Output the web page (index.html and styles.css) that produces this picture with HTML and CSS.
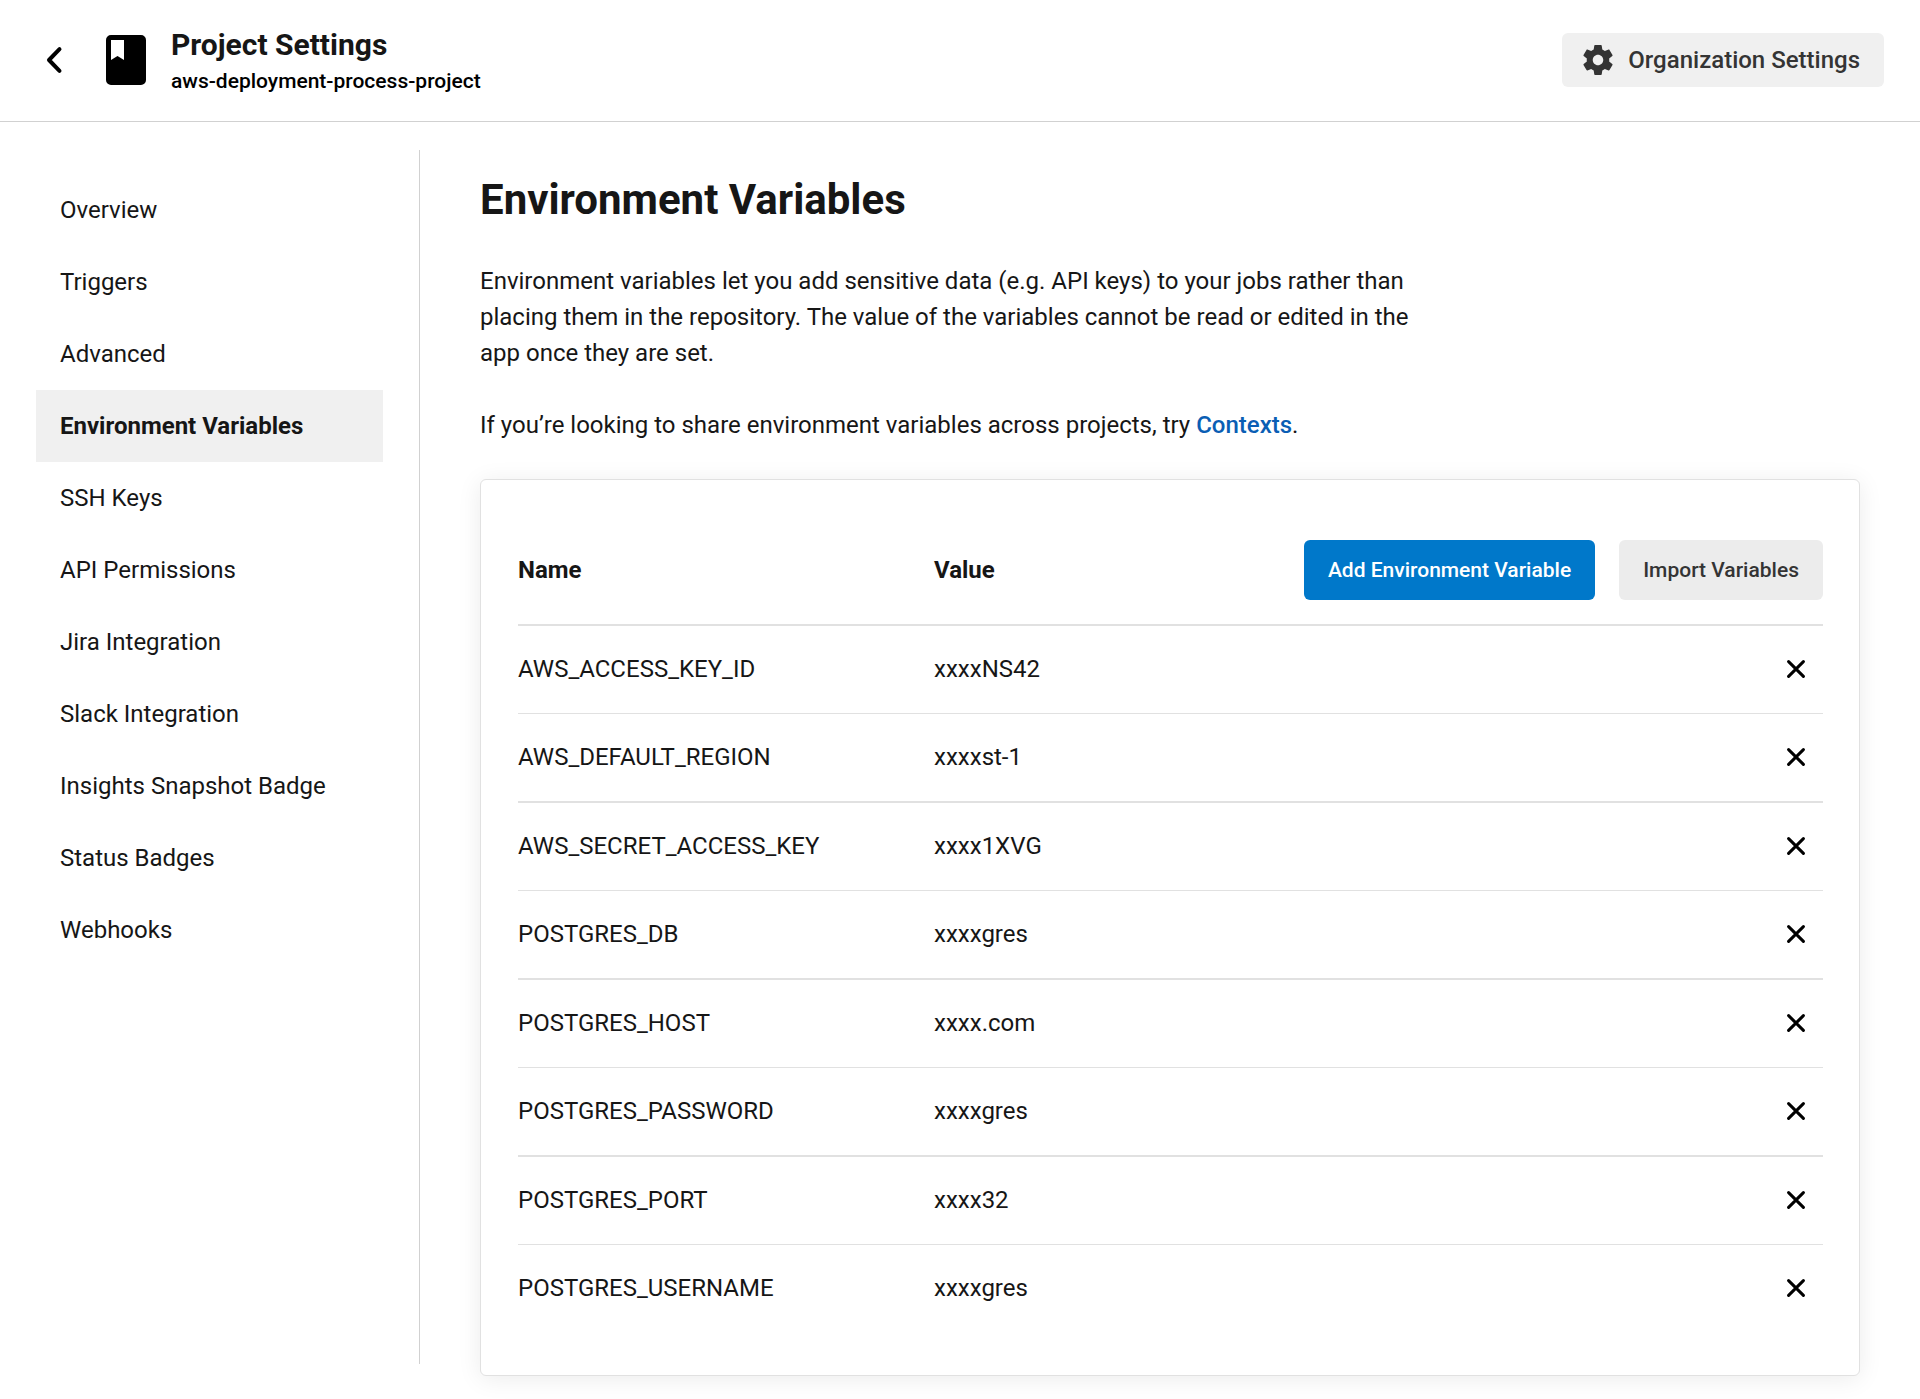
FILE: index.html
```html
<!DOCTYPE html>
<html lang="en">
<head>
<meta charset="utf-8">
<meta name="viewport" content="width=device-width, initial-scale=1">
<title>Project Settings</title>
<link rel="stylesheet" href="styles.css">
</head>
<body>
<svg class="sprite" aria-hidden="true">
  <symbol id="icon-close" viewBox="0 0 18 18"><path d="M1.6 1.6 16.4 16.4M16.4 1.6 1.6 16.4" fill="none" stroke="currentColor" stroke-width="3" stroke-linecap="round"/></symbol>
</svg>
<header class="topbar">
  <a class="back" href="#" aria-label="Back"><svg width="18" height="28" viewBox="0 0 18 28"><path d="M14.5 3.2 4 14 14.5 24.8" fill="none" stroke="currentColor" stroke-width="4" stroke-linecap="round" stroke-linejoin="round"/></svg></a>
  <svg class="book" width="40" height="50" viewBox="0 0 40 50" aria-hidden="true"><path d="M5 0H35a5 5 0 0 1 5 5V45a5 5 0 0 1-5 5H5a5 5 0 0 1-5-5V5a5 5 0 0 1 5-5ZM5 5V25l6.500-4L18 25V5Z" fill="currentColor" fill-rule="evenodd"/></svg>
  <div class="heading">
    <p class="heading-title">Project Settings</p>
    <p class="heading-project">aws-deployment-process-project</p>
  </div>
  <a class="org-button" href="#">
    <svg width="36" height="36" viewBox="0 0 24 24" aria-hidden="true"><path fill="currentColor" d="M19.430 12.980c.04-.32.07-.64.07-.98s-.03-.66-.07-.98l2.110-1.650c.19-.15.24-.42.12-.64l-2-3.460c-.12-.22-.39-.3-.61-.22l-2.490 1c-.52-.4-1.080-.73-1.690-.98l-.38-2.650C14.460 2.180 14.250 2 14 2h-4c-.25 0-.46.18-.49.42l-.38 2.650c-.61.25-1.170.59-1.690.98l-2.490-1c-.23-.09-.49 0-.61.22l-2 3.460c-.13.22-.07.49.12.64l2.110 1.650c-.04.32-.07.65-.07.98s.03.66.07.98l-2.110 1.650c-.19.15-.24.42-.12.64l2 3.460c.12.22.39.3.61.22l2.490-1c.52.4 1.080.73 1.690.98l.38 2.650c.03.24.24.42.49.42h4c.25 0 .46-.18.49-.42l.38-2.650c.61-.25 1.170-.59 1.690-.98l2.490 1c.23.09.49 0 .61-.22l2-3.460c.12-.22.07-.49-.12-.64l-2.110-1.650zM12 15.500c-1.930 0-3.500-1.570-3.500-3.500s1.570-3.500 3.500-3.500 3.500 1.570 3.500 3.500-1.570 3.500-3.500 3.500z"/></svg>
    Organization Settings
  </a>
</header>
<div class="page">
  <nav class="sidebar" aria-label="Project settings">
    <a class="nav-item" href="#">Overview</a>
    <a class="nav-item" href="#">Triggers</a>
    <a class="nav-item" href="#">Advanced</a>
    <a class="nav-item active" href="#" aria-current="page">Environment Variables</a>
    <a class="nav-item" href="#">SSH Keys</a>
    <a class="nav-item" href="#">API Permissions</a>
    <a class="nav-item" href="#">Jira Integration</a>
    <a class="nav-item" href="#">Slack Integration</a>
    <a class="nav-item" href="#">Insights Snapshot Badge</a>
    <a class="nav-item" href="#">Status Badges</a>
    <a class="nav-item" href="#">Webhooks</a>
  </nav>
  <main class="content">
    <h1>Environment Variables</h1>
    <div class="intro">
      <p>Environment variables let you add sensitive data (e.g. API keys) to your jobs rather than placing them in the repository. The value of the variables cannot be read or edited in the app once they are set.</p>
      <p>If you’re looking to share environment variables across projects, try <a href="#">Contexts</a>.</p>
    </div>
    <section class="card">
      <table class="variables">
        <thead>
          <tr>
            <th class="name" scope="col">Name</th>
            <th scope="col">Value</th>
            <td><div class="buttons"><button class="button primary" type="button">Add Environment Variable</button><button class="button" type="button">Import Variables</button></div></td>
          </tr>
        </thead>
        <tbody>
          <tr><td>AWS_ACCESS_KEY_ID</td><td>xxxxNS42</td><td class="remove"><button type="button" aria-label="Delete AWS_ACCESS_KEY_ID"><svg width="18" height="18"><use href="#icon-close"/></svg></button></td></tr>
          <tr><td>AWS_DEFAULT_REGION</td><td>xxxxst-1</td><td class="remove"><button type="button" aria-label="Delete AWS_DEFAULT_REGION"><svg width="18" height="18"><use href="#icon-close"/></svg></button></td></tr>
          <tr><td>AWS_SECRET_ACCESS_KEY</td><td>xxxx1XVG</td><td class="remove"><button type="button" aria-label="Delete AWS_SECRET_ACCESS_KEY"><svg width="18" height="18"><use href="#icon-close"/></svg></button></td></tr>
          <tr><td>POSTGRES_DB</td><td>xxxxgres</td><td class="remove"><button type="button" aria-label="Delete POSTGRES_DB"><svg width="18" height="18"><use href="#icon-close"/></svg></button></td></tr>
          <tr><td>POSTGRES_HOST</td><td>xxxx.com</td><td class="remove"><button type="button" aria-label="Delete POSTGRES_HOST"><svg width="18" height="18"><use href="#icon-close"/></svg></button></td></tr>
          <tr><td>POSTGRES_PASSWORD</td><td>xxxxgres</td><td class="remove"><button type="button" aria-label="Delete POSTGRES_PASSWORD"><svg width="18" height="18"><use href="#icon-close"/></svg></button></td></tr>
          <tr><td>POSTGRES_PORT</td><td>xxxx32</td><td class="remove"><button type="button" aria-label="Delete POSTGRES_PORT"><svg width="18" height="18"><use href="#icon-close"/></svg></button></td></tr>
          <tr><td>POSTGRES_USERNAME</td><td>xxxxgres</td><td class="remove"><button type="button" aria-label="Delete POSTGRES_USERNAME"><svg width="18" height="18"><use href="#icon-close"/></svg></button></td></tr>
        </tbody>
      </table>
    </section>
  </main>
</div>
</body>
</html>
```
FILE: styles.css
```css
* { box-sizing: border-box; }

body {
  margin: 0;
  background: #fff;
  color: #161616;
  font: 24px/36px Roboto, "Liberation Sans", sans-serif;
}

h1, p { margin: 0; }
a { color: inherit; text-decoration: none; }
button { font: inherit; color: inherit; border: 0; cursor: pointer; }
svg { display: block; }
.sprite { position: absolute; width: 0; height: 0; }

.topbar {
  display: flex;
  align-items: center;
  padding: 24px 36px 25px 45px;
  min-height: 122px;
  border-bottom: 1px solid #d1d1d1;
}
.back { color: #000; margin-right: 43px; }
.book { color: #000; margin-right: 25px; }
.heading-title { font-size: 30px; font-weight: 700; line-height: 42px; }
.heading-project { font-size: 21px; font-weight: 500; line-height: 30px; color: #000; }
.org-button {
  display: flex;
  align-items: center;
  gap: 12px;
  margin-left: auto;
  padding: 9px 24px 9px 18px;
  border-radius: 6px;
  background: #f0f0f0;
  color: #343434;
  font-weight: 500;
}

.page { display: flex; }
.sidebar {
  flex: none;
  width: 420px;
  margin: 28px 0 35px;
  padding: 24px 36px;
  border-right: 1px solid #d1d1d1;
}
.nav-item { display: block; padding: 18px 24px; }
.nav-item.active { background: #f0f0f0; font-weight: 700; }

.content { flex: 1; min-width: 0; padding: 52px 60px 23px; }
h1 { margin-bottom: 37px; font-size: 42px; font-weight: 700; line-height: 52px; }
.intro { display: grid; gap: 36px; max-width: 960px; margin-bottom: 36px; }
.intro a { color: #0a5eb4; font-weight: 500; }

.card {
  padding: 60px 36px 43px 37px;
  border: 1px solid #e1e1e1;
  border-radius: 6px;
  background: #fff;
  box-shadow: 0 3px 24px rgba(0, 0, 0, 0.08);
}
.variables { width: 100%; border-spacing: 0; }
.variables th, .variables td { padding: 0; text-align: left; vertical-align: middle; }
.variables th { font-weight: 700; }
.variables .name { width: 416px; }
.variables thead th, .variables thead td { height: 86px; padding-bottom: 24px; border-bottom: 2px solid #e1e1e1; }
.variables tbody td { height: 89px; padding-bottom: 1px; border-bottom: 2px solid #e1e1e1; }
.variables tbody tr:nth-child(odd) td { height: 88px; border-bottom-width: 1px; }
.variables tbody tr:last-child td { height: 87px; border-bottom: 0; }

.buttons { display: flex; justify-content: flex-end; gap: 24px; }
.button {
  padding: 12px 24px;
  border-radius: 6px;
  background: #ececec;
  color: #343434;
  font-size: 21px;
  font-weight: 500;
  white-space: nowrap;
}
.button.primary { background: #0078ca; color: #fff; }
.remove button { display: block; margin-left: auto; padding: 18px; background: none; color: #000; }
```
